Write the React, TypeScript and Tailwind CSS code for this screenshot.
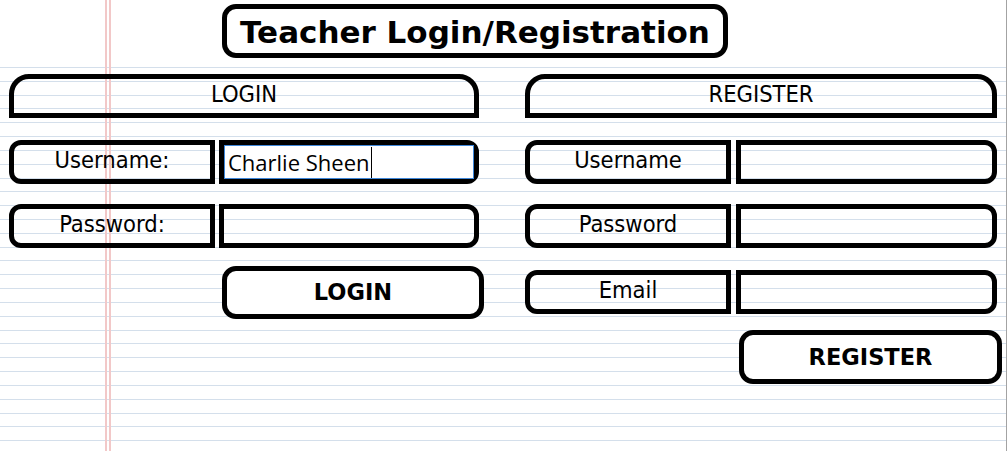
import React from "react";

const labelFont = "font-['DejaVu_Sans_Condensed','Open_Sans',sans-serif]";
const boldFont = "font-['DejaVu_Sans','Open_Sans',sans-serif] font-bold";

function LabelBox({ text, w }: { text: string; w: string }) {
  return (
    <div
      className={`flex h-[44px] ${w} items-center justify-center rounded-l-[12px] border-[5px] border-black pb-[2px] text-[23.5px] text-black ${labelFont}`}
    >
      {text}
    </div>
  );
}

function InputBox({ w }: { w: string }) {
  return <div className={`h-[44px] ${w} rounded-r-[12px] border-[5px] border-black`} />;
}

export default function App() {
  return (
    <div className="relative h-[451px] w-[1007px] overflow-hidden border-r border-[#a3a3a3] bg-white bg-[image:linear-gradient(to_bottom,#fff_64px,transparent_64px),repeating-linear-gradient(to_bottom,transparent_0px,transparent_11.72px,#d4dfeb_11.72px,#d4dfeb_12.72px,transparent_12.72px,transparent_13.82px)]">
      <div className="absolute top-0 bottom-0 left-[105px] w-[2px] bg-[#f2c8c8]" />
      <div className="absolute top-0 bottom-0 left-[109px] w-[2px] bg-[#f2c8c8]" />

      <div className="relative pt-[4px]">
        {/* Title */}
        <div
          className={`ml-[222px] flex h-[54px] w-[506px] items-center justify-center rounded-[14px] border-[5px] border-black bg-white pt-[3px] text-[31px] text-black ${boldFont}`}
        >
          Teacher Login/Registration
        </div>

        <div className="mt-[16px] flex">
          {/* Login column */}
          <div className="ml-[9px] w-[470px] shrink-0">
            <div
              className={`flex h-[44px] items-center justify-center rounded-t-[20px] border-[5px] border-black pb-[2px] text-[23.5px] text-black ${labelFont}`}
            >
              LOGIN
            </div>

            <div className="mt-[22px] flex gap-[4px]">
              <LabelBox text="Username:" w="w-[206px]" />
              <div className="h-[44px] flex-1 rounded-r-[12px] border-[5px] border-black">
                <div className="flex h-full w-full items-center border border-[#3f87d9] bg-white pl-[3px] font-['Open_Sans',sans-serif] text-[22px] text-black">
                  <span>Charlie Sheen</span>
                  <span className="ml-[1px] h-[31px] w-px bg-black" />
                </div>
              </div>
            </div>

            <div className="mt-[20px] flex gap-[4px]">
              <LabelBox text="Password:" w="w-[206px]" />
              <InputBox w="flex-1" />
            </div>

            <button
              className={`mt-[18px] ml-[213px] flex h-[53px] w-[262px] items-center justify-center rounded-[14px] border-[5px] border-black bg-white pt-[1px] text-[22.5px] text-black ${boldFont}`}
            >
              LOGIN
            </button>
          </div>

          {/* Register column */}
          <div className="ml-[46px] w-[472px] shrink-0">
            <div
              className={`flex h-[44px] items-center justify-center rounded-t-[20px] border-[5px] border-black pb-[2px] text-[23.5px] text-black ${labelFont}`}
            >
              REGISTER
            </div>

            <div className="mt-[22px] flex gap-[5px]">
              <LabelBox text="Username" w="w-[206px]" />
              <InputBox w="flex-1" />
            </div>

            <div className="mt-[20px] flex gap-[5px]">
              <LabelBox text="Password" w="w-[206px]" />
              <InputBox w="flex-1" />
            </div>

            <div className="mt-[22px] flex gap-[5px]">
              <LabelBox text="Email" w="w-[206px]" />
              <InputBox w="flex-1" />
            </div>

            <button
              className={`mt-[16px] ml-[214px] flex h-[54px] w-[263px] items-center justify-center rounded-[14px] border-[5px] border-black bg-white pt-[1px] text-[22.5px] text-black ${boldFont}`}
            >
              REGISTER
            </button>
          </div>
        </div>
      </div>
    </div>
  );
}
